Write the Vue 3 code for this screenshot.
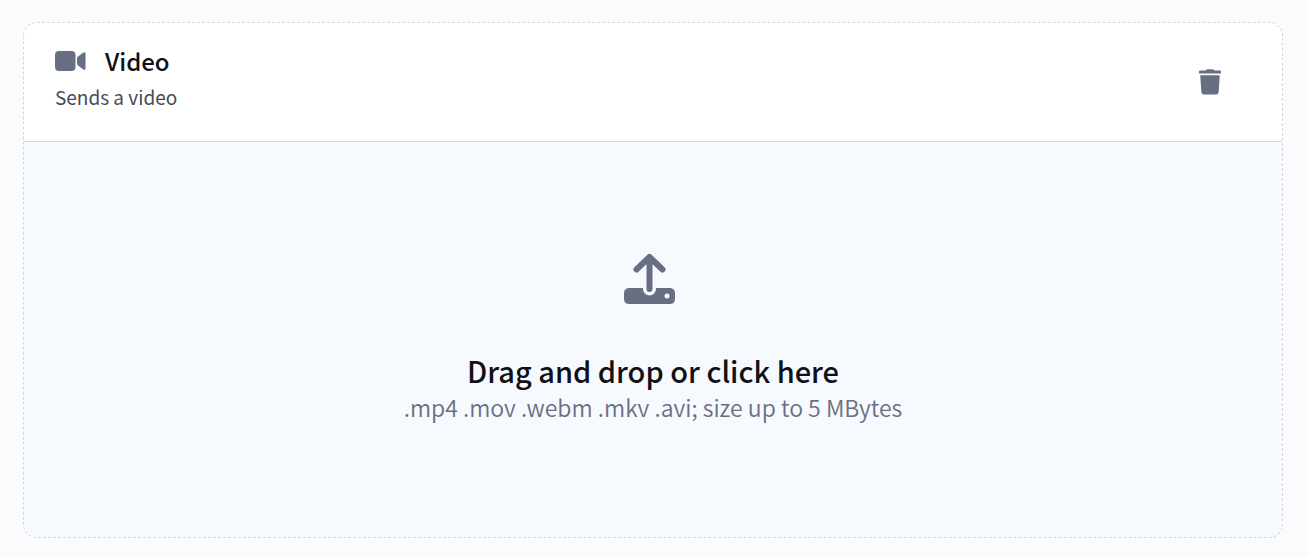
<script setup>
import { ref } from 'vue'

const emit = defineEmits(['remove', 'select'])

const fileInput = ref(null)

function openPicker() {
  fileInput.value.click()
}

function pick(files) {
  if (files.length) emit('select', files[0])
}
</script>

<template>
  <main class="page">
    <section class="card">
      <header class="header">
        <div class="info">
          <h2 class="title">
            <svg class="video-icon" viewBox="0 0 32 22" aria-hidden="true">
              <rect x="0" y="1" width="20.500" height="20" rx="4" />
              <path d="M22 8.500Q22 7.300 23 6.600L28 2.800Q30.500 1.400 30.500 3.600V18.400Q30.500 20.600 28 19.200L23 15.400Q22 14.700 22 13.500Z" />
            </svg>
            Video
          </h2>
          <p class="description">Sends a video</p>
        </div>
        <button class="remove" type="button" aria-label="Remove" @click="emit('remove')">
          <svg class="trash-icon" viewBox="0 0 22 26" aria-hidden="true">
            <path d="M1 1.600H6.500L8 .2H14L15.500 1.600H21Q22 1.600 22 2.600V4.600H0V2.600Q0 1.600 1 1.600Z" />
            <path d="M1.300 6.300H20.700L19.700 23Q19.500 25.600 17 25.600H5Q2.500 25.600 2.300 23Z" />
          </svg>
        </button>
      </header>
      <button
        class="dropzone"
        type="button"
        @click="openPicker"
        @dragover.prevent
        @drop.prevent="pick($event.dataTransfer.files)"
      >
        <svg class="upload-icon" viewBox="0 0 52 52" aria-hidden="true">
          <path
            class="arrow"
            d="M25.500 36V4.500M12.500 16.500L25.500 4L38.500 16.500"
          />
          <path
            d="M5.500 35H19V36A6.500 6.500 0 0 0 32 36V35H45.500Q51 35 51 40.500V45.500Q51 51 45.500 51H5.500Q0 51 0 45.500V40.500Q0 35 5.500 35Z"
          />
          <circle class="dot" cx="43" cy="43" r="2.500" />
        </svg>
        <span class="prompt">Drag and drop or click here</span>
        <span class="hint">.mp4 .mov .webm .mkv .avi; size up to 5 MBytes</span>
      </button>
      <input
        ref="fileInput"
        type="file"
        accept=".mp4,.mov,.webm,.mkv,.avi"
        aria-label="Video file"
        hidden
        @change="pick($event.target.files)"
      />
    </section>
  </main>
</template>

<style>
body {
  background-color: #fafbfd;
}
</style>

<style scoped>
.page {
  padding: 22px 25px 19px 23px;
  font-family: 'Noto Sans CJK SC', 'Noto Sans', sans-serif;
  color: #101114;
}

.card {
  border: 1px dashed #d5d7de;
  border-radius: 14px;
  background-color: #fff;
}

.header {
  display: flex;
  align-items: center;
  justify-content: space-between;
  padding: 21px 61px 21px 31px;
  border-bottom: 1px solid #d5d7de;
}

.info {
  padding-bottom: 6px;
}

.title {
  display: flex;
  align-items: center;
  gap: 18px;
  margin: 0;
  font-size: 24px;
  font-weight: 500;
  line-height: 34px;
}

.description {
  margin: 2px 0 0;
  font-size: 19px;
  line-height: 34px;
  color: #464a56;
}

svg {
  fill: #686f82;
}

.video-icon {
  width: 32px;
  height: 22px;
}

.remove,
.dropzone {
  border: 0;
  font-family: inherit;
  color: inherit;
  cursor: pointer;
}

.remove {
  display: flex;
  padding: 0;
  background: none;
}

.trash-icon {
  width: 22px;
  height: 26px;
}

.dropzone {
  display: flex;
  flex-direction: column;
  align-items: center;
  width: 100%;
  padding: 111px 24px 113px;
  border-radius: 0 0 14px 14px;
  background-color: #f6f9fe;
}

.upload-icon {
  width: 52px;
  height: 52px;
  margin: 0 6px 45px 0;
}

.arrow {
  fill: none;
  stroke: #686f82;
  stroke-width: 6;
  stroke-linecap: round;
  stroke-linejoin: round;
}

.dot {
  fill: #f6f9fe;
}

.prompt {
  font-size: 29px;
  font-weight: 500;
  line-height: 40px;
}

.hint {
  font-size: 23px;
  font-weight: 350;
  line-height: 34px;
  color: #686f82;
}
</style>
